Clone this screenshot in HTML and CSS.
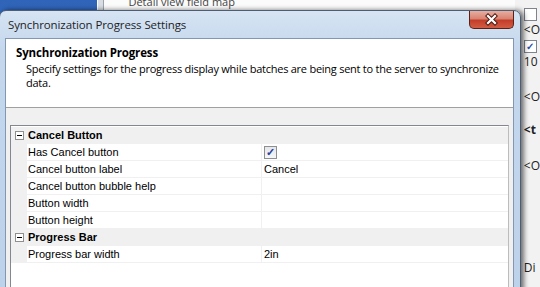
FILE: index.html
```html
<!DOCTYPE html>
<html lang="en">
<head>
    <meta charset="UTF-8">
    <title>Synchronization Progress Settings</title>
    <link rel="stylesheet" href="styles.css">
</head>
<body>
    <div class="desktop">
        <div class="app">
            <div class="app-nav"></div>
            <div class="app-split"></div>
            <div class="app-main">
                <div class="app-line">Detail view field map</div>
            </div>
            <div class="app-side">
                <div class="side-item"><span class="side-box"></span></div>
                <div class="side-item">&lt;O</div>
                <div class="side-item"><span class="side-box checked">&#10003;</span></div>
                <div class="side-item">10</div>
                <div class="side-item gap1">&lt;O</div>
                <div class="side-item gap2 bold">&lt;t</div>
                <div class="side-item gap3">&lt;O</div>
                <div class="side-item last">Di</div>
            </div>
        </div>

        <div class="dialog">
            <div class="titlebar">
                <span class="title">Synchronization Progress Settings</span>
                <span class="close">
                    <svg width="43" height="17" viewBox="0 0 43 17">
                        <path d="M18 5 L25 12 M25 5 L18 12" stroke="#4a1b14" stroke-width="4.2" stroke-linecap="square"/>
                        <path d="M18 5 L25 12 M25 5 L18 12" stroke="#ffffff" stroke-width="2.2" stroke-linecap="square"/>
                    </svg>
                </span>
            </div>
            <div class="client">
                <div class="header">
                    <div class="header-title">Synchronization Progress</div>
                    <div class="header-desc">
                        <div class="desc-line">Specify settings for the progress display while batches are being sent to the server to synchronize</div>
                        <div class="desc-line">data.</div>
                    </div>
                </div>
                <div class="body">
                    <div class="grid">
                        <div class="row cat">
                            <span class="gutter"><span class="expander"></span></span>
                            <span class="cat-name">Cancel Button</span>
                        </div>
                        <div class="row">
                            <span class="gutter"></span>
                            <span class="name">Has Cancel button</span>
                            <span class="value"><span class="check">&#10003;</span></span>
                        </div>
                        <div class="row">
                            <span class="gutter"></span>
                            <span class="name">Cancel button label</span>
                            <span class="value">Cancel</span>
                        </div>
                        <div class="row">
                            <span class="gutter"></span>
                            <span class="name">Cancel button bubble help</span>
                            <span class="value"></span>
                        </div>
                        <div class="row">
                            <span class="gutter"></span>
                            <span class="name">Button width</span>
                            <span class="value"></span>
                        </div>
                        <div class="row">
                            <span class="gutter"></span>
                            <span class="name">Button height</span>
                            <span class="value"></span>
                        </div>
                        <div class="row cat">
                            <span class="gutter"><span class="expander"></span></span>
                            <span class="cat-name">Progress Bar</span>
                        </div>
                        <div class="row">
                            <span class="gutter"></span>
                            <span class="name">Progress bar width</span>
                            <span class="value">2in</span>
                        </div>
                    </div>
                </div>
            </div>
        </div>
    </div>
</body>
</html>
```

FILE: styles.css
```css
body {
    margin: 0;
    font-family: "Liberation Sans", Arial, sans-serif;
    font-size: 11px;
    color: #000;
}
.desktop {
    position: relative;
    width: 540px;
    height: 287px;
    overflow: hidden;
    background: #f4f4f4;
}

/* application behind the dialog */
.app {
    display: flex;
    height: 287px;
}
.app-nav {
    width: 103px;
    background: linear-gradient(#2f64b8, #4a82d4);
}
.app-split {
    width: 6px;
    background: #d9dde3;
    border-left: 1px solid #ffffff;
    border-right: 1px solid #9aa3ae;
}
.app-main {
    width: 411px;
    background: #fbfbfb;
    padding-left: 24px;
    font-family: "Open Sans", sans-serif;
    font-size: 11px;
    color: #444;
}
.app-line {
    line-height: 15px;
    margin-top: -6px;
}
.app-side {
    flex: 1;
    padding-left: 9px;
    background: #f2f2f2;
    font-family: "Open Sans", sans-serif;
    font-size: 12px;
    color: #222;
}
.side-item {
    height: 16px;
    line-height: 16px;
    overflow: hidden;
}
.side-item:first-child {
    margin-top: 6px;
}
.side-item.gap1 {
    margin-top: 19px;
}
.side-item.gap2 {
    margin-top: 17px;
    font-weight: bold;
}
.side-item.gap3 {
    margin-top: 20px;
}
.side-item.last {
    margin-top: 86px;
}
.side-box {
    display: inline-block;
    width: 11px;
    height: 11px;
    border: 1px solid #7d848d;
    background: #fff;
    vertical-align: middle;
    overflow: hidden;
    font-size: 10px;
    line-height: 11px;
    text-align: center;
    color: #2b4fa8;
    font-weight: bold;
}

/* dialog window */
.dialog {
    position: absolute;
    left: -1px;
    top: 10px;
    width: 520px;
    height: 300px;
    border: 1px solid #4d5d74;
    border-radius: 7px 7px 0 0;
    background: linear-gradient(#d6e4f3, #c4d7ed 40px, #bcd2ea);
    box-shadow: 3px 0 5px rgba(0, 0, 0, 0.55);
    display: flex;
    flex-direction: column;
}
.titlebar {
    flex-shrink: 0;
    display: flex;
    justify-content: space-between;
    align-items: flex-start;
    height: 27px;
}
.title {
    padding: 7px 0 0 8px;
    font-family: "Open Sans", sans-serif;
    font-size: 11.5px;
    line-height: 14px;
    color: #1e1e1e;
    letter-spacing: -0.1px;
}
.close {
    display: flex;
    margin-right: 6px;
    width: 43px;
    height: 17px;
    border: 1px solid #5a2119;
    border-top: none;
    border-radius: 0 0 5px 5px;
    background: linear-gradient(#e8ada0, #d88472 45%, #c43d2a 55%, #d25c43);
}
.client {
    flex: 1;
    min-height: 0;
    margin: 0 6px 0 5px;
    border: 1px solid #8396b2;
    display: flex;
    flex-direction: column;
}
.header {
    flex-shrink: 0;
    height: 61px;
    padding: 7px 0 0 10px;
    background: #fff;
    border-bottom: 1px solid #a0a0a0;
    font-family: "Open Sans", sans-serif;
    font-size: 11px;
}
.header-title {
    font-size: 11.5px;
    letter-spacing: -0.15px;
    font-weight: bold;
    line-height: 14px;
}
.header-desc {
    margin: 2px 0 0 10px;
    letter-spacing: -0.25px;
    white-space: nowrap;
}
.desc-line {
    height: 14px;
    line-height: 14px;
}
.body {
    flex: 1;
    display: flex;
    flex-direction: column;
    background: #f0f0f0;
    padding: 17px 4px 0 4px;
}

/* property grid */
.grid {
    flex: 1;
    border: 1px solid #828790;
    border-right-color: #b9bcc1;
    background: #fff;
    padding-top: 1px;
}
.row {
    display: grid;
    grid-template-columns: 16px 234px 1fr;
    height: 17px;
}
.gutter {
    background: #f0f0f0;
    display: flex;
    align-items: center;
    justify-content: center;
}
.name,
.value {
    line-height: 16px;
    border-bottom: 1px solid #f0f0f0;
    padding-left: 1px;
    white-space: nowrap;
}
.value {
    border-left: 1px solid #f0f0f0;
    padding-left: 2px;
    display: flex;
    align-items: center;
}
.row.cat {
    background: #f0f0f0;
}
.cat-name {
    grid-column: 2 / 4;
    font-weight: bold;
    line-height: 17px;
    padding-left: 1px;
}
.expander {
    position: relative;
    width: 7px;
    height: 7px;
    border: 1px solid #8f8f8f;
    background: #fff;
}
.expander::after {
    content: "";
    position: absolute;
    left: 1px;
    top: 3px;
    width: 5px;
    height: 1px;
    background: #000;
}
.check {
    width: 11px;
    height: 11px;
    border: 1px solid #8e8f8f;
    background: linear-gradient(#e4e6ea, #f6f7f9);
    color: #2a3f9a;
    font-size: 11px;
    font-weight: bold;
    line-height: 11px;
    text-align: center;
}
```
